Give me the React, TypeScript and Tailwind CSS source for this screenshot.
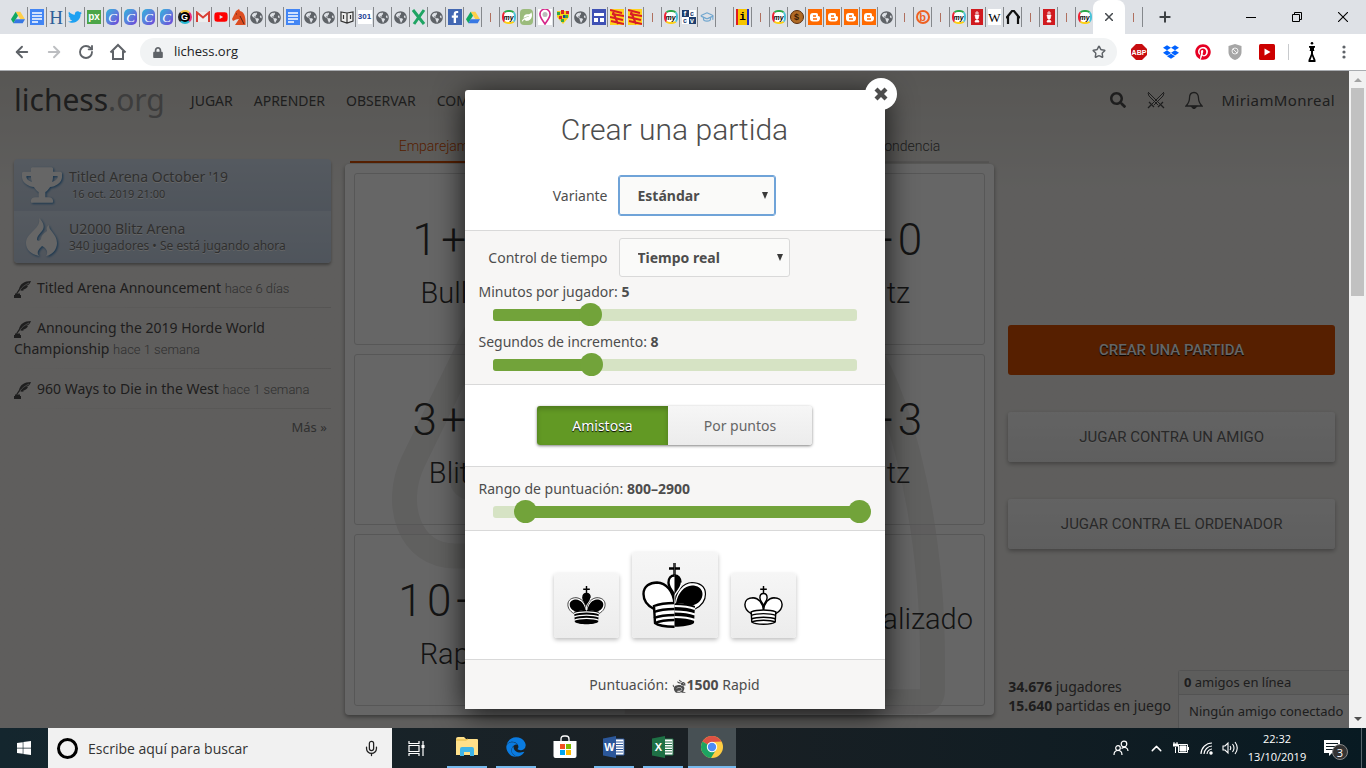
import { useState, type ReactNode } from "react";
import {
  FaDropbox,
  FaEdge,
  FaFacebookF,
  FaGlobeAmericas,
  FaLeaf,
  FaLock,
  FaPinterest,
  FaSearch,
  FaTrophy,
  FaTwitter,
  FaWindows,
  FaYoutube,
} from "react-icons/fa";
import { GiRabbit } from "react-icons/gi";
import { ArrowLeft, ArrowRight, ChevronUp, GraduationCap, Mic, Plus, RotateCw, Star, X } from "lucide-react";

/* ---------- Tab strip ---------- */

const boxIcon = "flex size-[14px] items-center justify-center overflow-hidden leading-none font-bold";

function TabIcon({ kind }: { kind: string }) {
  switch (kind) {
    case "drive":
      return (
        <svg viewBox="0 0 24 22" className="w-[14px] h-[13px]">
          <path d="M8 1h8l8 13h-8z" fill="#ffcf48" />
          <path d="M8 1l4 7-8 13-4-7z" fill="#11a861" />
          <path d="M8 14h16l-4 7H4z" fill="#3777e3" />
        </svg>
      );
    case "docs":
      return (
        <svg viewBox="0 0 14 16" className="h-4 w-[14px]">
          <path d="M0 0h14v16H0z" fill="#4285f4" />
          <path d="M2 4h10M2 7h10M2 10h10M2 13h6" stroke="#fff" strokeWidth="1.4" />
        </svg>
      );
    case "h":
      return <span className="font-['Liberation_Serif',serif] text-[19px] leading-none text-[#2f5f98]">H</span>;
    case "twitter":
      return <FaTwitter className="size-[14px] text-[#1da1f2]" />;
    case "px":
      return <span className={`${boxIcon} bg-[#4ba547] text-[10px] text-white`}>px</span>;
    case "canva":
      return (
        <span className="flex h-4 w-[13px] items-center justify-center rounded-[5px] bg-linear-to-br from-[#18b4dc] to-[#6b3fd8] font-['Liberation_Serif',serif] text-[13px] leading-none text-white italic">
          C
        </span>
      );
    case "g":
      return <span className={`${boxIcon} rounded-full border-2 border-t-[#f6c343] border-r-[#ed2a7b] border-b-[#25b7d3] border-l-[#222] bg-black text-[9px] text-white`}>G</span>;
    case "gmail":
      return (
        <svg viewBox="0 0 14 12" className="h-3 w-[14px]">
          <path d="M1 1h12v10H1z" fill="#eee" />
          <path d="M1 11V1.5l6 5 6-5V11" fill="none" stroke="#d93f35" strokeWidth="2" />
        </svg>
      );
    case "youtube":
      return <FaYoutube className="size-[14px] text-[#f00]" />;
    case "horse":
      return (
        <svg viewBox="0 0 14 16" className="h-4 w-[14px]">
          <path d="M4 2L7 0l1 2c4 1 6 5 5.500 14H3l4-6-3 .5L1 12l-1-2z" fill="#dc4d22" />
          <path d="M8 7l4 8M4 5h1" stroke="#5b2417" />
        </svg>
      );
    case "globe":
      return <FaGlobeAmericas className="size-[13px] text-[#5f6368]" />;
    case "book":
      return (
        <svg viewBox="0 0 14 14" className="size-[14px]" fill="#eee" stroke="#333" strokeWidth="1.2">
          <path d="M1 2l6 1 6-1v9l-6 2-6-2zM7 3v10M3.500 5v4M10.500 5v4" />
        </svg>
      );
    case "301":
      return <span className={`${boxIcon} bg-white text-[8px] text-[#1c3f94]`}>301</span>;
    case "x":
      return (
        <svg viewBox="0 0 14 16" className="h-4 w-[14px]" fill="none" stroke="#1fa463" strokeWidth="3">
          <path d="M1 1l11 14M12 1L2 15" />
        </svg>
      );
    case "facebook":
      return (
        <span className="flex h-4 w-[14px] items-center justify-center bg-[#4267b2] text-white">
          <FaFacebookF className="size-[12px]" />
        </span>
      );
    case "my":
      return (
        <span className={`${boxIcon} rounded-[6px] border-2 border-t-[#2ba84a] border-r-[#4cc3d9] border-b-[#fdd017] border-l-[#e23] bg-white text-[7px] text-black italic`}>
          my
        </span>
      );
    case "leaf":
      return (
        <span className="flex h-4 w-[13px] items-center justify-center rounded-[4px] bg-[#9bbb7c] text-white">
          <FaLeaf className="size-[10px]" />
        </span>
      );
    case "pin":
      return (
        <svg viewBox="0 0 14 16" className="h-4 w-[14px]">
          <path d="M0 0h14v16H0z" fill="#fff" />
          <path d="M7 15C3 9 1.500 7.500 2 5a5 5 0 0110 0c.5 2.500-1 4-5 10z" fill="#fff" stroke="#d5268a" strokeWidth="1.600" />
          <circle cx="7" cy="5.500" r="2.500" fill="#bbb" />
        </svg>
      );
    case "heart":
      return (
        <svg viewBox="0 0 14 16" className="h-4 w-[14px]">
          <path d="M1 2h12v6l-6 7-6-7z" fill="#f7d117" />
          <path d="M1 3h3v3H1zM9 6h3v3H9zM5 10h3v3H5z" fill="#35a649" />
          <path d="M5 1h3v4H5zM10 2h3v3h-3zM3 7h3v3H3z" fill="#d8232a" />
          <path d="M7 6h2v3H7z" fill="#27428f" />
        </svg>
      );
    case "sites":
      return (
        <svg viewBox="0 0 14 16" className="h-4 w-[14px]">
          <path d="M0 0h14v16H0z" fill="#3f51b5" />
          <path d="M2 4h10v3H2zM2 9h4v4H2zM8 9h4v4H8z" fill="#fff" />
        </svg>
      );
    case "flag":
      return (
        <svg viewBox="0 0 14 16" className="h-4 w-[14px]">
          <path d="M0 0h14v16H0z" fill="#ffd21c" />
          <path d="M0 1l12 3M2 5l12 2M0 8l13 3M1 12l13 3M3 3l5 12" stroke="#d81e26" strokeWidth="2" />
        </svg>
      );
    case "fc":
      return (
        <span className="grid size-[14px] grid-cols-2 bg-white text-[7px] leading-[7px] font-bold text-white">
          <span className="bg-[#1d3e6e] text-center">f</span>
          <span className="text-center text-[#1d3e6e]">c</span>
          <span className="text-center text-[#1d3e6e]">c</span>
          <span className="bg-[#1d3e6e] text-center">v</span>
        </span>
      );
    case "cap":
      return <GraduationCap className="size-[14px] text-[#72a7cf]" strokeWidth={2} />;
    case "i":
      return <span className="flex h-4 w-[13px] items-center justify-center border-x-2 border-l-[#e01b22] border-r-[#232bbf] bg-[#f5c400] font-['Liberation_Mono',monospace] text-[11px] leading-none font-bold text-black">i</span>;
    case "coin":
      return <span className={`${boxIcon} rounded-full border border-[#5a2d0c] bg-[#b06a25] text-[9px] text-[#3a1c06]`}>$</span>;
    case "blogger":
      return (
        <svg viewBox="0 0 14 16" className="h-4 w-[14px]">
          <path d="M0 0h14v16H0z" fill="#ff6a00" />
          <path d="M5 4h3c2 0 2 1 2 3 2 0 2 1 2 2 0 2-1 3.500-3 3.500H5c-2 0-3-1-3-3V7c0-2 1-3 3-3z" fill="#fff" />
          <path d="M5 7h3M5 10h4" stroke="#ff6a00" strokeWidth="1.300" />
        </svg>
      );
    case "bitly":
      return <span className={`${boxIcon} rounded-full border-2 border-[#ee6123] text-[11px] text-[#ee6123]`}>b</span>;
    case "redchess":
      return (
        <svg viewBox="0 0 12 16" className="h-4 w-3">
          <path d="M0 0h12v16H0z" fill="#d01a1f" />
          <path d="M6 2v3M4 4h4M4 6h4l-1 4h-2zM4 13a2 2 0 014 0z" stroke="#fff" fill="#fff" strokeWidth=".8" />
        </svg>
      );
    case "w":
      return <span className="flex h-4 w-[13px] items-center justify-center bg-white font-['Liberation_Serif',serif] text-[13px] leading-none text-black">W</span>;
    case "arch":
      return (
        <svg viewBox="0 0 14 16" className="h-4 w-[14px]" fill="none" stroke="#111" strokeWidth="2.200">
          <path d="M2 15V7l4-5h2l4 5v8M0 9l3-3M14 9l-3-3" />
        </svg>
      );
    case "mark":
      return <span className="h-[9px] w-px bg-[#b0705f]" />;
    default:
      return null;
  }
}

const wideTabs = ["drive", "docs", "h", "twitter", "px"];
const tabs = (
  "canva canva canva canva g gmail youtube horse globe globe docs globe globe book 301 globe globe x globe facebook drive mark my leaf pin heart globe sites flag flag mark my fc cap none i mark my coin blogger blogger blogger blogger globe mark bitly mark my redchess w arch mark redchess mark"
).split(" ");

function TabStrip() {
  const item = "flex h-5 shrink-0 items-center justify-center border-r border-[#85888c]";
  return (
    <div className="flex h-[34px] shrink-0 items-center bg-[#dee1e6] pl-[9px] font-['Liberation_Sans',sans-serif]">
      {wideTabs.map((k) => (
        <div key={k} className={`${item} w-[19px]`}>
          <TabIcon kind={k} />
        </div>
      ))}
      {tabs.map((k, i) => (
        <div key={i} className={`${item} w-[18px]`}>
          <TabIcon kind={k} />
        </div>
      ))}
      <div className="flex w-[17px] shrink-0 justify-center">
        <TabIcon kind="my" />
      </div>
      <div className="flex h-full w-8 shrink-0 items-center justify-center rounded-t-lg bg-white">
        <button aria-label="Cerrar pestaña">
          <svg viewBox="0 0 8 8" className="size-2" stroke="#45494d" strokeWidth="1.500">
            <path d="M0 0l8 8M8 0L0 8" />
          </svg>
        </button>
      </div>
      <div className={`${item} w-[18px]`}>
        <TabIcon kind="mark" />
      </div>
      <button aria-label="Nueva pestaña" className="ml-[14px]">
        <Plus className="size-4 text-[#3c4043]" strokeWidth={3} />
      </button>
      <div className="ml-auto flex h-7 items-center">
        <button aria-label="Minimizar" className="flex w-[46px] justify-center">
          <span className="h-px w-[10px] bg-black" />
        </button>
        <button aria-label="Restaurar" className="flex w-[46px] justify-center">
          <svg viewBox="0 0 10 10" className="size-[10px]" fill="none" stroke="#000">
            <path d="M.5 2.500h7v7h-7zM2.500 2.500v-2h7v7h-2" />
          </svg>
        </button>
        <button aria-label="Cerrar" className="flex w-[46px] justify-center">
          <svg viewBox="0 0 10 10" className="size-[10px]" stroke="#000" strokeWidth="1.100">
            <path d="M0 0l10 10M10 0L0 10" />
          </svg>
        </button>
      </div>
    </div>
  );
}

function Toolbar() {
  const slot = "flex w-8 shrink-0 items-center justify-center";
  return (
    <div className="flex h-[37px] shrink-0 items-center border-b border-[#a9acb0] bg-white pl-[6px]">
      <button aria-label="Atrás" className={slot}><ArrowLeft className="size-[18px] text-[#5f6368]" strokeWidth={2.500} /></button>
      <button aria-label="Adelante" className={slot}><ArrowRight className="size-[18px] text-[#bcbec1]" strokeWidth={2.500} /></button>
      <button aria-label="Recargar" className={slot}><RotateCw className="size-4 text-[#5f6368]" strokeWidth={2.800} /></button>
      <button aria-label="Inicio" className={slot}>
        <svg viewBox="0 0 18 18" className="size-[18px]" fill="none" stroke="#5f6368" strokeWidth="2">
          <path d="M1.500 9.500L9 2l7.500 7.500M4 8v8h10V8" />
        </svg>
      </button>
      <div className="ml-[6px] flex h-7 min-w-0 flex-1 items-center gap-[11px] rounded-full bg-[#f1f3f4] px-[11px]">
        <FaLock className="ml-[2px] h-[11px] w-[10px] text-[#5f6368]" />
        <input aria-label="Dirección" defaultValue="lichess.org" className="min-w-0 flex-1 bg-transparent font-['Open_Sans',sans-serif] text-[13px] text-[#202124] outline-none" />
        <button aria-label="Marcador"><Star className="size-[14px] text-[#5f6368]" strokeWidth={2.500} /></button>
      </div>
      <div className="flex items-center pl-[6px]">
        <span className={slot}>
          <svg viewBox="0 0 16 16" className="size-4">
            <path d="M5 0h6l5 5v6l-5 5H5l-5-5V5z" fill="#c70d10" />
            <text x="8" y="10.500" fontSize="7" fontWeight="700" textAnchor="middle" fill="#fff" fontFamily="Liberation Sans, sans-serif">ABP</text>
          </svg>
        </span>
        <span className={slot}><FaDropbox className="size-4 text-[#0062ff]" /></span>
        <span className={slot}><FaPinterest className="size-4 text-[#e60023]" /></span>
        <span className={slot}>
          <svg viewBox="0 0 14 16" className="h-4 w-[14px]">
            <path d="M7 0l6.500 2v6c0 4-3 7-6.500 8C3.500 15 .5 12 .5 8V2z" fill="#a6a6a6" />
            <circle cx="7" cy="7" r="3" fill="none" stroke="#eee" />
            <path d="M5 5l4 4" stroke="#eee" />
          </svg>
        </span>
        <span className={slot}>
          <svg viewBox="0 0 16 16" className="size-4">
            <rect width="16" height="16" rx="1.500" fill="#c00" />
            <path d="M5.500 4.500l6 3.500-6 3.500z" fill="#fff" />
          </svg>
        </span>
        <span className="ml-[5px] h-4 w-px bg-[#c8cacd]" />
        <span className="ml-[7px] flex w-8 justify-center">
          <svg viewBox="0 0 8 20" className="h-5 w-2">
            <circle cx="4" cy="1.300" r="1.300" />
            <path d="M1 4h6v1.500L6 6v2l.5 1H1.500L2 8V6L1 5.500zM3 9h2v3l2.500 6v2H.5v-2L3 12z" />
            <path d="M4 14l1.500 4h-3z" fill="#fff" />
          </svg>
        </span>
        <button aria-label="Menú" className={slot}>
          <svg viewBox="0 0 4 16" className="h-4 w-1" fill="#5f6368">
            <circle cx="2" cy="3" r="1.600" /><circle cx="2" cy="8" r="1.600" /><circle cx="2" cy="13" r="1.600" />
          </svg>
        </button>
        <span className="w-[6px]" />
      </div>
    </div>
  );
}

/* ---------- Lobby page ---------- */

function SiteHeader() {
  const link = "text-[14px] text-[#4d4d4d] uppercase";
  return (
    <header className="flex h-[60px] shrink-0 items-center px-[14px] pb-[2px]">
      <a href="#inicio" className="text-[30px] leading-none text-[#4d4d4d]">
        lichess<span className="text-[#999]">.org</span>
      </a>
      <nav className="ml-[26px] flex gap-[21px]">
        <a href="#jugar" className={link}>Jugar</a>
        <a href="#aprender" className={link}>Aprender</a>
        <a href="#observar" className={link}>Observar</a>
        <a href="#comunidad" className={link}>Comunidad</a>
        <a href="#herramientas" className={link}>Herramientas</a>
      </nav>
      <div className="ml-auto flex items-center text-[#4d4d4d]">
        <button aria-label="Buscar" className="flex w-[38px] justify-center"><FaSearch className="size-4" /></button>
        <button aria-label="Desafíos" className="flex w-[38px] justify-center">
          <svg viewBox="0 0 18 18" className="size-[18px]" fill="none" stroke="currentColor" strokeWidth="1.300">
            <path d="M1 1l14 14M17 1L3 15M1 2l1 3 9 9M17 2l-1 3-9 9" strokeWidth="1" />
            <path d="M2 11l5 5M16 11l-5 5M1 17l3-3M17 17l-3-3" />
          </svg>
        </button>
        <button aria-label="Notificaciones" className="flex w-[38px] justify-center">
          <svg viewBox="0 0 18 18" className="size-[18px]" fill="none" stroke="currentColor" strokeWidth="1.300">
            <path d="M9 1.500c-3 0-4.500 2.500-4.500 5.500 0 4-1.500 6-3.500 8h16c-2-2-3.500-4-3.500-8 0-3-1.500-5.500-4.500-5.500z" />
            <path d="M6.500 15.500h5L9 18z" fill="currentColor" />
          </svg>
        </button>
        <a href="#perfil" className="ml-[9px] text-[15px] tracking-wide">MiriamMonreal</a>
      </div>
    </header>
  );
}

function Tournament({ icon, title, children }: { icon: ReactNode; title: string; children: ReactNode }) {
  return (
    <a href="#torneo" className="flex h-[52px] items-center bg-linear-to-b from-[#d5e1f0] to-[#c5d3e5] pl-2 text-[#777] [text-shadow:0_1px_0_#fff]">
      <span className="mr-[7px] text-white drop-shadow-[1px_1px_1px_#3b83c0]">{icon}</span>
      <span className="flex flex-col">
        <span className="text-[14px] leading-[18px]">{title}</span>
        {children}
      </span>
    </a>
  );
}

function QuillIcon() {
  return (
    <svg viewBox="0 0 17 17" className="mr-[6px] inline size-[17px] align-middle" fill="currentColor">
      <path d="M17 0C10 0 6 3 5 8l-3 4.500 1 .5 3-4c1 1 3 1 4 0l-1-.5c2 0 4-1.500 5-3.500h-2c2-.5 4-2 5-5z" />
      <path d="M6 9c2-3 5-5 9-7" fill="none" stroke="#ddd" strokeWidth=".7" />
      <path d="M1 12.500h5v1.500h1v3H0v-3h1z" />
    </svg>
  );
}

const news = [
  { title: "Titled Arena Announcement", when: "hace 6 días" },
  { title: "Announcing the 2019 Horde World Championship", when: "hace 1 semana" },
  { title: "960 Ways to Die in the West", when: "hace 1 semana" },
];

function LeftColumn() {
  return (
    <aside className="pt-7">
      <div className="overflow-hidden rounded-sm shadow-[0_2px_3px_rgba(0,0,0,0.35)]">
        <Tournament icon={<FaTrophy className="size-10" />} title="Titled Arena October '19">
          <span className="pl-[3px] text-[11px] leading-4">16 oct. 2019 21:00</span>
        </Tournament>
        <Tournament
          icon={
            <svg viewBox="0 0 40 40" className="size-10" fill="currentColor">
              <path d="M17 1c5 5 6 9 3 13-3 4-5 5-5 9 1 1 3 1 4-1 0-3 2-5 6-8-1-3 0-5 2-6-1 5 8 9 8 18 0 7-5 12-11 13 3-4 0-8-4-10-3 3-6 6-3 10C8 37 4 32 4 26c0-5 3-8 8-13 4-4 6-7 5-12z" />
            </svg>
          }
          title="U2000 Blitz Arena"
        >
          <span className="text-[12px] leading-4">340 jugadores • Se está jugando ahora</span>
        </Tournament>
      </div>
      <div className="pt-[5px]">
        {news.map((n) => (
          <div key={n.title}>
            <a href="#noticia" className="block pt-[9px] pb-2 text-[14px] leading-[21px] text-[#4d4d4d]">
              <QuillIcon />
              {n.title} <span className="font-['Roboto',sans-serif] text-[13px] font-light text-[#777]">{n.when}</span>
            </a>
            <div className="h-px bg-linear-to-r from-transparent to-[#d5d3d0]" />
          </div>
        ))}
      </div>
      <a href="#mas" className="block pt-[9px] pr-1 text-right text-[13px] text-[#787878]">Más »</a>
    </aside>
  );
}

const pools = [
  ["1+0", "Bullet"], ["2+1", "Bullet"], ["3+0", "Blitz"],
  ["3+2", "Blitz"], ["5+0", "Blitz"], ["5+3", "Blitz"],
  ["10+0", "Rapid"], ["15+15", "Clásica"],
];

function Pools() {
  return (
    <main className="flex min-h-0 flex-col font-['Roboto',sans-serif]">
      <div className="mx-[5px] flex h-8 shrink-0 text-[14px] font-light text-[#4d4d4d]">
        <button className="flex-auto border-b-2 border-[#d64f00] text-[#d64f00]">Emparejamiento rápido</button>
        <button className="flex-auto border-b-2 border-[#d5d3d0]">Sala de partidas</button>
        <button className="flex-auto border-b-2 border-[#d5d3d0]">Correspondencia</button>
      </div>
      <div className="relative mt-px min-h-0 flex-1 overflow-hidden rounded-sm bg-white shadow-[0_2px_4px_rgba(0,0,0,0.4)]">
        <svg viewBox="0 0 650 551" className="absolute inset-0 size-full" fill="none" stroke="#edecea" strokeWidth="25">
          <path d="M140 150L68 298C48 340 64 392 110 392H230M490 140C560 210 588 370 588 500V526Q588 538 576 538H280" />
          <circle cx="125" cy="316" r="20" fill="#edecea" stroke="none" />
        </svg>
        <div className="relative grid h-full grid-cols-3 grid-rows-3 gap-[9px] p-[9px] text-[#333]">
          {pools.map(([clock, perf]) => (
            <button key={clock} className="flex flex-col items-center justify-center rounded-[3px] border border-[#d9d9d9] bg-white/20 pt-4">
              <span className="text-[44px] leading-[53px] font-light tracking-widest">{clock}</span>
              <span className="text-[29px] leading-[53px] font-light">{perf}</span>
            </button>
          ))}
          <button className="flex items-center justify-center rounded-[3px] border border-[#d9d9d9] bg-white/20 text-[29px] font-light">Personalizado</button>
        </div>
      </div>
    </main>
  );
}

function RightColumn() {
  const plain = "h-[50px] shrink-0 rounded-[3px] bg-linear-to-b from-[#f7f7f7] to-[#ececec] pt-px text-[#666] shadow-[0_2px_4px_rgba(0,0,0,0.3)] [text-shadow:0_1px_0_#fff]";
  return (
    <aside className="flex flex-col pt-[194px]">
      <div className="flex flex-col gap-[37px] font-['Roboto',sans-serif] text-[15px]">
        <button className="h-[50px] rounded-[3px] bg-[#d64f00] pt-px font-medium text-white [text-shadow:0_1px_1px_#000]">CREAR UNA PARTIDA</button>
        <button className={plain}>JUGAR CONTRA UN AMIGO</button>
        <button className={plain}>JUGAR CONTRA EL ORDENADOR</button>
      </div>
      <div className="mt-auto text-[14px] leading-[19px] text-[#4d4d4d]">
        <p><b>34.676</b> jugadores</p>
        <p><b>15.640</b> partidas en juego</p>
      </div>
    </aside>
  );
}

/* ---------- Game setup dialog ---------- */

function Caret() {
  return (
    <svg viewBox="0 0 6 7" className="pointer-events-none absolute top-4 right-[7px] h-[7px] w-[6px]">
      <path d="M0 0h6L3 7z" fill="#3a3a3a" />
    </svg>
  );
}

function SelectRow({ id, label, options, focused }: { id: string; label: string; options: string[]; focused?: boolean }) {
  return (
    <div className="flex items-center gap-[11px]">
      <label htmlFor={id} className="w-[143px] text-right">{label}</label>
      <span className="relative">
        <select
          id={id}
          className={
            focused
              ? "h-[39px] w-[156px] appearance-none rounded-[2px] border border-[#6fa3d8] bg-[#fafaf9] pl-[18px] font-bold outline-1 outline-[#6fa3d8]"
              : "h-[39px] w-[171px] appearance-none rounded-[3px] border border-[#d9d9d9] bg-[#fafaf9] pl-[18px] font-bold"
          }
        >
          {options.map((o) => <option key={o}>{o}</option>)}
        </select>
        <Caret />
      </span>
    </div>
  );
}

const rangeInput =
  "col-start-1 row-start-1 h-[23px] w-full appearance-none bg-transparent outline-none [&::-webkit-slider-thumb]:size-[23px] [&::-webkit-slider-thumb]:appearance-none [&::-webkit-slider-thumb]:rounded-full [&::-webkit-slider-thumb]:bg-[#72a33a]";

function Bar({ from, to }: { from: number; to: number }) {
  return (
    <div className="col-start-1 row-start-1 mr-[14px] ml-[10px] h-3 overflow-hidden rounded-[3px] bg-[#d6e3c4]">
      <div className="h-full bg-[#72a33a]" style={{ marginLeft: `${from}%`, width: `${to - from}%` }} />
    </div>
  );
}

function Slider({ id, label, shown, max, initial }: { id: string; label: string; shown: (v: number) => number; max: number; initial: number }) {
  const [v, setV] = useState(initial);
  return (
    <div className="h-[50px] px-[14px]">
      <label htmlFor={id} className="block h-[22px] leading-[22px]">{label}: <b>{shown(v)}</b></label>
      <div className="ml-[4px] grid items-center">
        <Bar from={0} to={(v / max) * 100} />
        <input id={id} type="range" min={0} max={max} value={v} onChange={(e) => setV(+e.target.value)} className={rangeInput} />
      </div>
    </div>
  );
}

function RatingRange() {
  const [lo, setLo] = useState(800);
  const [hi, setHi] = useState(2900);
  const pct = (n: number) => ((n - 600) / 2300) * 100;
  const layer = `${rangeInput} pointer-events-none [&::-webkit-slider-thumb]:pointer-events-auto`;
  return (
    <div className="h-[63px] px-[14px] pt-[11px]">
      <label htmlFor="rating-min" className="block h-[22px] leading-[22px]">Rango de puntuación: <b>{lo}–{hi}</b></label>
      <div className="ml-[4px] grid items-center">
        <Bar from={pct(lo)} to={pct(hi)} />
        <input id="rating-min" type="range" min={600} max={2900} step={50} value={lo} onChange={(e) => setLo(Math.min(+e.target.value, hi))} className={layer} />
        <input aria-label="Puntuación máxima" type="range" min={600} max={2900} step={50} value={hi} onChange={(e) => setHi(Math.max(+e.target.value, lo))} className={layer} />
      </div>
    </div>
  );
}

const lobe = "M12 46C4 42 1.500 36 1.500 31C1.500 23 8 19.500 15 19.500C24 20 31.500 28 32.500 41";
const lobeR = "M53 46C61 42 63.500 36 63.500 31C63.500 23 57 19.500 50 19.500C41 20 33.500 28 32.500 41";
const dome = "M32.500 33C31 28 26.500 25 26.500 19.500C26.500 15 29 12.500 32.500 12.500C36 12.500 38.500 15 38.500 19.500C38.500 25 34 28 32.500 33Z";
const base = "M12 43C22 39 43 39 53 43L52 60C46 65 19 65 13 60Z";

function WhiteKing() {
  return (
    <g fill="#fff" stroke="#000" strokeWidth="2.400">
      <path d="M32.500 0V12M27 5.500H38" />
      <path d={lobe} /><path d={lobeR} /><path d={dome} /><path d={base} />
      <path fill="none" d="M12 49C22 45 43 45 53 49M12 55C22 51 43 51 53 55M13 60C22 56 43 56 52 60" />
    </g>
  );
}

function BlackKing() {
  return (
    <g>
      <g stroke="#000" strokeWidth="2.400">
        <path d="M32.500 0V12M27 5.500H38" />
        <path d={dome} />
      </g>
      <g fill="#fff" stroke="#000" strokeWidth="1.200"><path d={lobe} /><path d={lobeR} /></g>
      <path d="M16 43C8 41 4.500 36 4.500 31C4.500 25 10 22.500 15 22.500C23 23 29 30 31 40C26 40 21 41 16 43Z" />
      <path d="M49 43C57 41 60.500 36 60.500 31C60.500 25 55 22.500 50 22.500C42 23 36 30 34 40C39 40 44 41 49 43Z" />
      <path d={base} />
      <path fill="none" stroke="#fff" strokeWidth="2" d="M12 46C22 42 43 42 53 46M12 51.500C22 47.500 43 47.500 53 51.500M12 57C22 53 43 53 53 57" />
      <path fill="none" stroke="#fff" strokeWidth="1.500" d="M32.500 41V33C34 29 39.500 25 39.500 19.500" />
    </g>
  );
}

function HalfKing() {
  return (
    <>
      <svg width="32.500" height="65" viewBox="0 0 32.500 65"><WhiteKing /></svg>
      <svg x="32.500" width="32.500" height="65" viewBox="32.500 0 32.500 65"><BlackKing /></svg>
    </>
  );
}

function ColorButton({ label, big, children }: { label: string; big?: boolean; children: ReactNode }) {
  return (
    <button
      aria-label={label}
      className={`flex items-center justify-center rounded-[3px] bg-linear-to-b from-[#f6f6f6] to-[#ececec] shadow-[0_2px_4px_rgba(0,0,0,0.25)] ${big ? "size-[86px]" : "size-[65px]"}`}
    >
      <svg viewBox="0 0 65 65" className={big ? "size-[65px]" : "size-[39px]"}>{children}</svg>
    </button>
  );
}

function SetupDialog() {
  const [rated, setRated] = useState(false);
  const minutes = [0, 0.25, 0.5, 0.75, 1, 1.5, 2, 3, 4, 5];
  const on = "bg-[#629924] text-white shadow-[inset_0_3px_5px_rgba(0,0,0,0.2)] [text-shadow:0_1px_1px_#000]";
  const off = "bg-linear-to-b from-[#f6f6f6] to-[#ececec] text-[#666]";
  return (
    <div role="dialog" aria-labelledby="setup-title" className="relative w-[420px] rounded-t-[3px] bg-white text-[14px] text-[#4d4d4d] shadow-[0_5px_30px_rgba(0,0,0,0.8)]">
      <button aria-label="Cerrar" className="absolute -top-3 -right-3 flex size-8 items-center justify-center rounded-full bg-white text-[#4d4d4d]">
        <X className="size-5" strokeWidth={5} strokeLinecap="butt" />
      </button>
      <div className="h-[140px] pt-[17px]">
        <h2 id="setup-title" className="mb-[24px] text-center font-['Roboto',sans-serif] text-[30px] leading-[45px] font-light">Crear una partida</h2>
        <SelectRow id="variant" label="Variante" options={["Estándar", "Chess960", "Horde"]} focused />
      </div>
      <div className="h-[155px] border-y border-[#d9d9d9] bg-[#f7f6f5] pt-[7px]">
        <SelectRow id="time-control" label="Control de tiempo" options={["Tiempo real", "Correspondencia", "Ilimitado"]} />
        <div className="pt-[4px]">
          <Slider id="minutes" label="Minutos por jugador" shown={(v) => minutes[v] ?? v - 4} max={34} initial={9} />
          <Slider id="increment" label="Segundos de incremento" shown={(v) => v} max={30} initial={8} />
        </div>
      </div>
      <div className="flex h-[81px] items-center justify-center">
        <div className="flex h-[39px] overflow-hidden rounded-[3px] shadow-[0_1px_3px_rgba(0,0,0,0.5)]">
          <button aria-pressed={!rated} onClick={() => setRated(false)} className={`w-[131px] ${rated ? off : on}`}>Amistosa</button>
          <button aria-pressed={rated} onClick={() => setRated(true)} className={`w-[144px] ${rated ? on : off}`}>Por puntos</button>
        </div>
      </div>
      <div className="border-y border-[#d9d9d9] bg-[#f7f6f5]"><RatingRange /></div>
      <div className="flex h-[128px] items-end justify-center gap-[13px] pb-[21px]">
        <ColorButton label="Negras"><BlackKing /></ColorButton>
        <ColorButton label="Color aleatorio" big><HalfKing /></ColorButton>
        <ColorButton label="Blancas"><WhiteKing /></ColorButton>
      </div>
      <div className="flex h-[50px] items-center justify-center border-t border-[#d9d9d9] bg-[#f7f6f5]">
        <p>Puntuación: <GiRabbit className="inline size-[15px]" /><b>1500</b> Rapid</p>
      </div>
    </div>
  );
}

/* ---------- Taskbar ---------- */

function OfficeIcon({ letter, tone }: { letter: string; tone: string }) {
  return (
    <svg viewBox="0 0 22 22" className="size-[22px]">
      <path d="M12 3h9v16h-9z" fill="#fff" stroke={tone} />
      <path d="M13 6h7M13 8.500h7M13 11h7M13 13.500h7M13 16h7" stroke={tone} />
      <path d="M0 2.500L13 0v22L0 19.500z" fill={tone} />
      <text x="6.500" y="15" fontSize="11" fontWeight="700" textAnchor="middle" fill="#fff" fontFamily="Liberation Sans, sans-serif">{letter}</text>
    </svg>
  );
}

function Taskbar() {
  const app = "flex h-full w-10 items-center justify-center border-b-2";
  return (
    <footer className="flex h-10 shrink-0 items-center bg-linear-to-r from-[#14262e] via-[#1a2024] to-[#081a22] font-['Open_Sans',sans-serif] text-white">
      <button aria-label="Inicio de Windows" className="flex w-12 justify-center"><FaWindows className="size-4" /></button>
      <label className="flex h-full w-[344px] items-center bg-[#f1f1f1] px-[9px]">
        <span className="size-[21px] rounded-full border-[3px] border-black" />
        <input aria-label="Buscar en el equipo" placeholder="Escribe aquí para buscar" className="ml-[10px] min-w-0 flex-1 bg-transparent text-[14px] outline-none placeholder:text-[#333]" />
        <Mic className="mr-[3px] size-[17px] text-[#222]" strokeWidth={1.800} />
      </label>
      <button aria-label="Vista de tareas" className="flex w-12 justify-center">
        <svg viewBox="0 0 17 15" className="h-[15px] w-[17px]" fill="none" stroke="#fff" strokeWidth="1.200">
          <path d="M1 0v2.500h10V0M1 15v-2.500h10V15M1 4.500h10v6H1zM15 0v15" /><path d="M13.500 5.500h3" strokeWidth="3" />
        </svg>
      </button>
      <div className="ml-[7px] flex h-full gap-[9px]">
        <button aria-label="Explorador" className={`${app} border-[#76b9ed]`}>
          <svg viewBox="0 0 22 20" className="h-5 w-[22px]">
            <path d="M0 2q0-2 2-2h6l2 2h11q1 0 1 1v15H0z" fill="#ffe08a" /><path d="M0 3h10l2-1" stroke="#e5b63c" fill="none" />
            <path d="M4 19v-7q0-2 2-2h10q2 0 2 2v7h-4v-4H8v4z" fill="#3fb5e8" />
          </svg>
        </button>
        <button aria-label="Edge" className={`${app} border-[#76b9ed]`}><FaEdge className="size-5 text-[#0a7be0]" /></button>
        <button aria-label="Tienda" className={`${app} border-transparent`}>
          <svg viewBox="0 0 24 24" className="size-6">
            <path d="M8 6V4q0-3 3-3h2q3 0 3 3v2" fill="none" stroke="#fff" strokeWidth="1.300" /><path d="M.5 6h23v15q0 2-2 2h-19q-2 0-2-2z" fill="#fff" />
            <path d="M7 9h5v5H7z" fill="#f25022" /><path d="M13 9h5v5h-5z" fill="#7fba00" /><path d="M7 15h5v5H7z" fill="#00a4ef" /><path d="M13 15h5v5h-5z" fill="#ffb900" />
          </svg>
        </button>
        <button aria-label="Word" className={`${app} border-[#76b9ed]`}><OfficeIcon letter="W" tone="#2b579a" /></button>
        <button aria-label="Excel" className={`${app} border-[#76b9ed]`}><OfficeIcon letter="X" tone="#1e7145" /></button>
      </div>
      <button aria-label="Chrome" className="ml-[5px] flex h-full w-12 items-center justify-center border-b-2 border-[#76b9ed] bg-[#475054]">
        <svg viewBox="0 0 22 22" className="size-[22px]">
          <circle cx="11" cy="11" r="11" fill="#ffcd42" />
          <path d="M11 11L1.500 5.500A11 11 0 0120.500 5.500L11 6z" fill="#dd5144" />
          <path d="M1.500 5.500A11 11 0 0010 22l5.500-9L11 11z" fill="#1da462" />
          <circle cx="11" cy="11" r="5.200" fill="#fff" /><circle cx="11" cy="11" r="4.200" fill="#4c8bf5" />
        </svg>
      </button>
      <div className="ml-auto flex h-full items-center">
        <svg viewBox="0 0 16 16" className="size-4" fill="none" stroke="#fff" strokeWidth="1.200">
          <circle cx="11" cy="4" r="2.800" /><circle cx="5" cy="8" r="2.300" /><path d="M1 15c0-3 2-4.500 4-4.500S9 12 9 15M8.500 8.500C12 6 15 8 15 11" />
        </svg>
        <ChevronUp className="ml-[19px] size-[17px]" strokeWidth={2} />
        <svg viewBox="0 0 16 12" className="ml-2 h-3 w-4" fill="none" stroke="#fff">
          <path d="M5.500 2.500h9v8h-9zM15.500 5v3M2.500 5v6M1 0v2M4 0v2" /><path d="M7 4h6v5H7zM0 2h5v2H0z" fill="#fff" />
        </svg>
        <svg viewBox="0 0 13 13" className="ml-[11px] size-[13px]" fill="none" stroke="#fff" strokeWidth="1.100">
          <path d="M1 12C1 6 6 1 12 1M4 12c0-4 4-8 8-8M7 12c0-3 3-5 5-5" /><circle cx="11" cy="11" r="1.200" fill="#fff" />
        </svg>
        <svg viewBox="0 0 16 14" className="ml-[9px] h-[14px] w-4" fill="none" stroke="#fff" strokeWidth="1.100">
          <path d="M1 5h2l3-3v10L3 9H1zM8 5q1.500 2 0 4M10.500 3q3 4 0 8M13 1q4.500 6 0 12" />
        </svg>
        <div className="w-[78px] text-center text-[11px] leading-[18px]">
          <p>22:32</p>
          <p>13/10/2019</p>
        </div>
        <button aria-label="Notificaciones del sistema" className="relative ml-[8px] h-6 w-6">
          <svg viewBox="0 0 16 16" className="size-4">
            <path d="M0 0h16v13h-8l-3 3v-3H0z" fill="#fff" /><path d="M2 3.500h12M2 6.500h12M2 9.500h9" stroke="#0d1b22" />
          </svg>
          <span className="absolute right-0 bottom-0 flex size-4 items-center justify-center rounded-full border border-[#888] bg-[#333] text-[11px] leading-none">3</span>
        </button>
        <span className="mr-1 ml-[13px] h-full w-px bg-[#56646b]" />
      </div>
    </footer>
  );
}

function Scrollbar() {
  return (
    <div aria-hidden="true" className="flex w-[17px] shrink-0 flex-col items-center justify-between bg-[#f1f1f1] py-[7px]">
      <svg viewBox="0 0 8 4" className="h-1 w-2"><path d="M0 4l4-4 4 4z" fill="#a3a3a3" /></svg>
      <span className="mt-[6px] mb-auto h-[208px] w-[13px] bg-[#c1c1c1]" />
      <svg viewBox="0 0 8 4" className="h-1 w-2"><path d="M0 0l4 4 4-4z" fill="#505050" /></svg>
    </div>
  );
}

export default function App() {
  return (
    <div className="flex h-screen flex-col overflow-hidden">
      <TabStrip />
      <Toolbar />
      <div className="flex min-h-0 flex-1 font-['Noto_Sans',sans-serif]">
        <div className="relative flex min-w-0 flex-1 flex-col overflow-hidden bg-linear-to-b from-[#dbd8d2] to-[#edebe8] to-[116px]">
          <SiteHeader />
          <div className="grid min-h-0 flex-1 grid-cols-[317fr_650fr_327fr] gap-[14px] px-[14px] pb-[13px]">
            <LeftColumn />
            <Pools />
            <RightColumn />
          </div>
          <div className="absolute right-0 bottom-0 w-[171px] rounded-tl-[3px] border-t border-l border-[#d0d0d0] bg-[#f4f4f4] text-[13px] text-[#4d4d4d]">
            <p className="h-6 border-b border-[#d0d0d0] bg-[#e9e8e6] pl-[5px] leading-[23px]"><b>0</b> amigos en línea</p>
            <p className="h-[33px] pl-[10px] leading-[33px]">Ningún amigo conectado</p>
          </div>
          <div className="absolute inset-0 flex items-center justify-center bg-black/60">
            <SetupDialog />
          </div>
        </div>
        <Scrollbar />
      </div>
      <Taskbar />
    </div>
  );
}
